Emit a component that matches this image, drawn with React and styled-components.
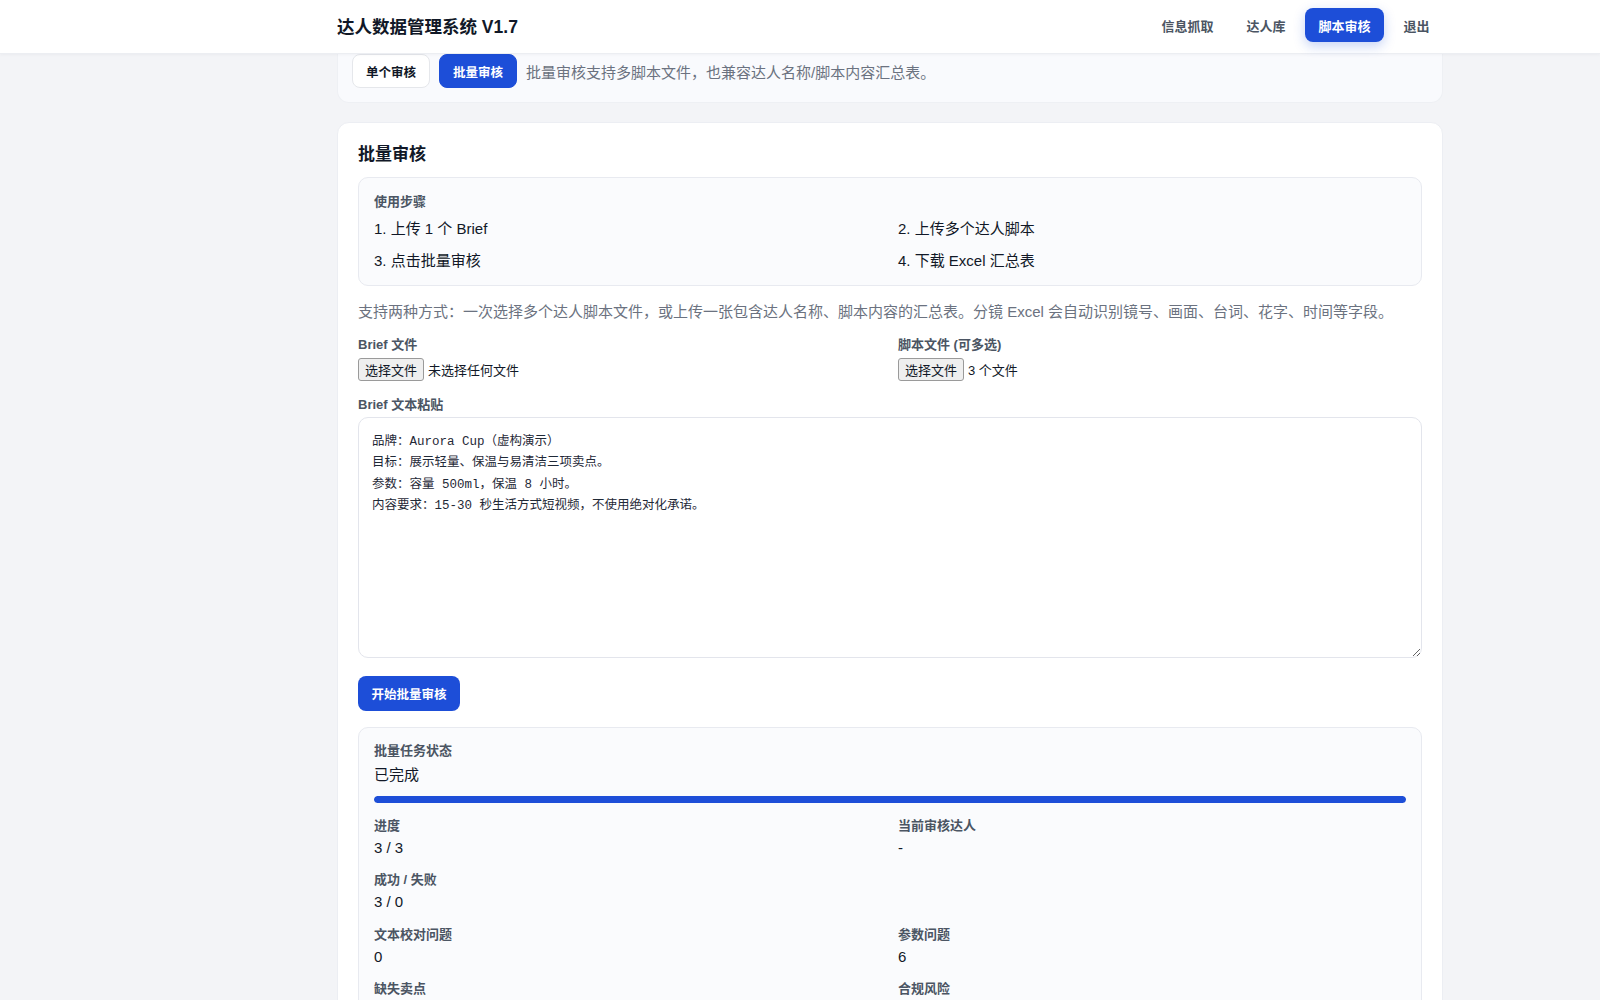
import React from "react";
import styled, { createGlobalStyle } from "styled-components";

const Global = createGlobalStyle`
  html, body { margin: 0; padding: 0; }
  body {
    background: #f3f4f7;
    font-family: "Liberation Sans", "Noto Sans CJK SC", sans-serif;
    color: #111827;
    overflow: hidden;
  }
  * { box-sizing: border-box; }
`;

const Header = styled.header`
  height: 54px;
  background: #ffffff;
  border-bottom: 1px solid #eceef2;
  box-shadow: 0 1px 3px rgba(17, 24, 39, 0.04);
  position: relative;
  z-index: 2;
`;

const Shell = styled.div`
  width: 1106px;
  margin-left: 337px;
`;

const HeaderInner = styled(Shell)`
  height: 100%;
  display: flex;
  align-items: center;
  justify-content: space-between;
  padding-bottom: 3px;
`;

const Brand = styled.div`
  font-size: 17.5px;
  font-weight: 700;
  color: #111827;
`;

const Nav = styled.nav`
  display: flex;
  align-items: center;
  gap: 6px;
`;

const NavItem = styled.span`
  height: 34px;
  display: flex;
  align-items: center;
  padding: 0 13.5px;
  border-radius: 8px;
  font-size: 13px;
  font-weight: 700;
  color: ${(p) => (p.$active ? "#ffffff" : "#4b5563")};
  background: ${(p) => (p.$active ? "#1d4ed8" : "transparent")};
  box-shadow: ${(p) => (p.$active ? "0 4px 12px rgba(29, 78, 216, 0.25)" : "none")};
`;

const Main = styled(Shell)`
  display: flex;
  flex-direction: column;
  gap: 19px;
`;

const ModeCard = styled.section`
  background: #f9fafd;
  border: 1px solid #eef0f4;
  border-top: none;
  border-radius: 0 0 12px 12px;
  padding: 0 14px 14px;
  display: flex;
  align-items: center;
  gap: 9px;
`;

const SegButton = styled.button`
  height: 34px;
  padding: 0 13px;
  border-radius: 8px;
  font-family: inherit;
  font-size: 12.5px;
  font-weight: 700;
  border: 1px solid ${(p) => (p.$active ? "#1d4ed8" : "#e5e7eb")};
  background: ${(p) => (p.$active ? "#1d4ed8" : "#ffffff")};
  color: ${(p) => (p.$active ? "#ffffff" : "#111827")};
`;

const ModeHint = styled.span`
  font-size: 15px;
  color: #6b7280;
`;

const Card = styled.section`
  background: #ffffff;
  border: 1px solid #eceef3;
  border-radius: 12px;
  padding: 19px 20px 20px;
  display: flex;
  flex-direction: column;
`;

const CardTitle = styled.h2`
  margin: 0 0 9px;
  font-size: 17px;
  line-height: 26px;
  font-weight: 700;
  color: #111827;
`;

const Panel = styled.div`
  background: #fafbfd;
  border: 1px solid #e8eaf0;
  border-radius: 10px;
  padding: ${(p) => p.$pad || "15px"};
  margin-top: ${(p) => p.$mt || "0px"};
  display: flex;
  flex-direction: column;
`;

const SmallLabel = styled.div`
  font-size: 13px;
  line-height: 16px;
  font-weight: 700;
  color: #4b5563;
`;

const TwoCol = styled.div`
  display: grid;
  grid-template-columns: 1fr 1fr;
  column-gap: 16px;
  row-gap: ${(p) => p.$rowGap || "0px"};
  margin-top: ${(p) => p.$mt || "0px"};
`;

const StepText = styled.div`
  font-size: 15px;
  line-height: 22px;
  color: #111827;
`;

const Description = styled.p`
  margin: 15px 0 0;
  font-size: 15px;
  line-height: 22px;
  color: #6b7280;
`;

const Field = styled.div`
  display: flex;
  flex-direction: column;
  gap: ${(p) => p.$gap || "5px"};
  margin-top: ${(p) => p.$mt || "0px"};
`;

const FileRow = styled.div`
  display: flex;
  align-items: center;
  gap: 4px;
  font-size: 13px;
  color: #111827;
  height: 24px;
`;

const FileButton = styled.span`
  display: inline-flex;
  align-items: center;
  height: 23px;
  padding: 0 6px;
  background: #efefef;
  border: 1px solid #9a9a9a;
  border-radius: 3px;
  font-size: 13px;
  color: #111827;
`;

const TextArea = styled.textarea`
  width: 100%;
  height: 241px;
  border: 1px solid #e3e5ec;
  border-radius: 10px;
  background: #ffffff;
  padding: 14px 13px 11px;
  font-family: "Liberation Mono", "Noto Sans CJK SC", monospace;
  font-size: 12.5px;
  line-height: 21.5px;
  color: #1f2937;
  resize: vertical;
  outline: none;
`;

const PrimaryButton = styled.button`
  align-self: flex-start;
  margin-top: 18px;
  height: 35px;
  padding: 0 13.5px;
  border: none;
  border-radius: 8px;
  background: #1d4ed8;
  color: #ffffff;
  font-family: inherit;
  font-size: 12.5px;
  font-weight: 700;
`;

const StatusValue = styled.div`
  font-size: 15px;
  line-height: 22px;
  color: #111827;
  margin-top: ${(p) => p.$mt || "3px"};
`;

const Progress = styled.div`
  height: 7px;
  border-radius: 999px;
  background: #e5e7eb;
  margin: 10px 0 15px;
  overflow: hidden;
`;

const ProgressFill = styled.div`
  height: 100%;
  background: #1d4ed8;
  border-radius: 999px;
`;

const Stat = styled.div`
  display: flex;
  flex-direction: column;
  min-height: 41px;
`;

const steps = ["1. 上传 1 个 Brief", "2. 上传多个达人脚本", "3. 点击批量审核", "4. 下载 Excel 汇总表"];

const briefText =
  "品牌：Aurora Cup（虚构演示）\n目标：展示轻量、保温与易清洁三项卖点。\n参数：容量 500ml，保温 8 小时。\n内容要求：15-30 秒生活方式短视频，不使用绝对化承诺。";

const stats = [
  ["进度", "3 / 3"],
  ["当前审核达人", "-"],
  ["成功 / 失败", "3 / 0"],
  null,
  ["文本校对问题", "0"],
  ["参数问题", "6"],
  ["缺失卖点", null],
  ["合规风险", null],
];

export default function App() {
  const progress = 100;
  return (
    <>
      <Global />
      <Header>
        <HeaderInner>
          <Brand>达人数据管理系统 V1.7</Brand>
          <Nav>
            <NavItem>信息抓取</NavItem>
            <NavItem>达人库</NavItem>
            <NavItem $active>脚本审核</NavItem>
            <NavItem>退出</NavItem>
          </Nav>
        </HeaderInner>
      </Header>
      <Main>
        <ModeCard>
          <SegButton>单个审核</SegButton>
          <SegButton $active>批量审核</SegButton>
          <ModeHint>批量审核支持多脚本文件，也兼容达人名称/脚本内容汇总表。</ModeHint>
        </ModeCard>
        <Card>
          <CardTitle>批量审核</CardTitle>
          <Panel $pad="16px 15px 13px">
            <SmallLabel>使用步骤</SmallLabel>
            <TwoCol $mt="8px" $rowGap="9.5px">
              {steps.map((s) => (
                <StepText key={s}>{s}</StepText>
              ))}
            </TwoCol>
          </Panel>
          <Description>
            支持两种方式：一次选择多个达人脚本文件，或上传一张包含达人名称、脚本内容的汇总表。分镜 Excel 会自动识别镜号、画面、台词、花字、时间等字段。
          </Description>
          <TwoCol $mt="14px">
            <Field>
              <SmallLabel>Brief 文件</SmallLabel>
              <FileRow>
                <FileButton>选择文件</FileButton>
                <span>未选择任何文件</span>
              </FileRow>
            </Field>
            <Field>
              <SmallLabel>脚本文件 (可多选)</SmallLabel>
              <FileRow>
                <FileButton>选择文件</FileButton>
                <span>3 个文件</span>
              </FileRow>
            </Field>
          </TwoCol>
          <Field $mt="15px" $gap="4px">
            <SmallLabel>Brief 文本粘贴</SmallLabel>
            <TextArea defaultValue={briefText} />
          </Field>
          <PrimaryButton>开始批量审核</PrimaryButton>
          <Panel $pad="15px" $mt="16px">
            <SmallLabel>批量任务状态</SmallLabel>
            <StatusValue $mt="5px">已完成</StatusValue>
            <Progress>
              <ProgressFill style={{ width: `${progress}%` }} />
            </Progress>
            <TwoCol $rowGap="13.5px">
              {stats.map((s, i) =>
                s ? (
                  <Stat key={i}>
                    <SmallLabel>{s[0]}</SmallLabel>
                    {s[1] !== null && <StatusValue>{s[1]}</StatusValue>}
                  </Stat>
                ) : (
                  <Stat key={i} />
                )
              )}
            </TwoCol>
          </Panel>
        </Card>
      </Main>
    </>
  );
}
